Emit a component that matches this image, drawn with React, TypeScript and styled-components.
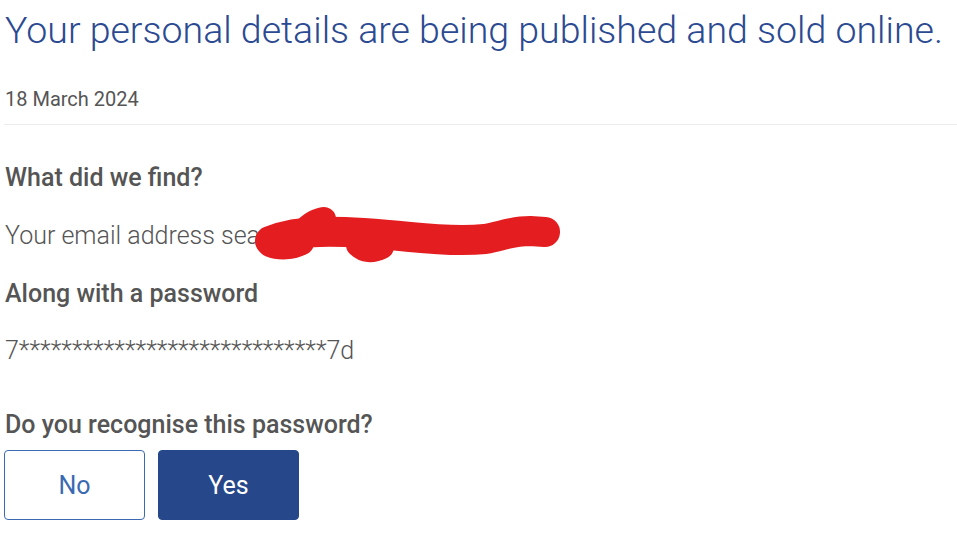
import React from "react";
import styled, { createGlobalStyle } from "styled-components";

const Global = createGlobalStyle`
  html, body { margin: 0; padding: 0; background: #fff; }
  body { font-family: Roboto, "Liberation Sans", Arial, sans-serif; }
`;

const Page = styled.div`
  padding: 0 0 0 4px;
  display: flex;
  flex-direction: column;
`;

const Title = styled.h1`
  margin: 8px 0 0 1px;
  font-weight: 300;
  font-size: 37.5px;
  line-height: 44px;
  color: #2b4a91;
  white-space: nowrap;
`;

const DateLine = styled.div`
  margin-top: 35px;
  font-size: 20px;
  line-height: 24px;
  color: #555;
  padding: 0 0 13px 1px;
  border-bottom: 1px solid #ececec;
`;

const Label = styled.h2<{ $top: number }>`
  margin: ${(p) => p.$top}px 0 0 1px;
  font-size: 25px;
  line-height: 30px;
  font-weight: 500;
  color: #555;
`;

const Value = styled.div<{ $top: number }>`
  position: relative;
  margin: ${(p) => p.$top}px 0 0 1px;
  font-size: 25px;
  line-height: 30px;
  font-weight: 300;
  color: #555;
`;

const Scribble = styled.svg`
  position: absolute;
  left: 235px;
  top: -26px;
  width: 330px;
  height: 70px;
  overflow: visible;
`;

const Buttons = styled.div`
  display: flex;
  gap: 13px;
  margin-top: 10px;
`;

const Btn = styled.button<{ $primary?: boolean }>`
  width: 141px;
  height: 70px;
  border-radius: 4px;
  font-family: Roboto, "Liberation Sans", Arial, sans-serif;
  font-size: 25px;
  font-weight: 400;
  cursor: pointer;
  border: 1px solid ${(p) => (p.$primary ? "#26488a" : "#3b6ab3")};
  background: ${(p) => (p.$primary ? "#26488a" : "#fff")};
  color: ${(p) => (p.$primary ? "#fff" : "#3b6ab3")};
`;

export default function App() {
  return (
    <>
      <Global />
      <Page>
        <Title>Your personal details are being published and sold online.</Title>
        <DateLine>18 March 2024</DateLine>
        <Label $top={38}>What did we find?</Label>
        <Value $top={28}>
          Your email address sea
          <Scribble viewBox="0 0 330 70">
            <g fill="none" stroke="#e41e20" strokeLinecap="round" strokeLinejoin="round">
              <path
                d="M30 46 C 45 40, 60 37, 80 37 C 110 36, 140 39, 170 42 C 200 45, 225 46, 245 44 C 262 41, 272 36, 290 36 L 305 37"
                strokeWidth="30"
              />
              <path d="M64 36 C 70 28, 76 26, 84 24" strokeWidth="24" />
              <path d="M118 50 C 124 56, 132 57, 142 52" strokeWidth="24" />
              <path d="M30 50 C 40 54, 52 53, 62 48" strokeWidth="24" />
            </g>
          </Scribble>
        </Value>
        <Label $top={28}>Along with a password</Label>
        <Value $top={27}>7*****************************7d</Value>
        <Label $top={44}>Do you recognise this password?</Label>
        <Buttons>
          <Btn>No</Btn>
          <Btn $primary>Yes</Btn>
        </Buttons>
      </Page>
    </>
  );
}
